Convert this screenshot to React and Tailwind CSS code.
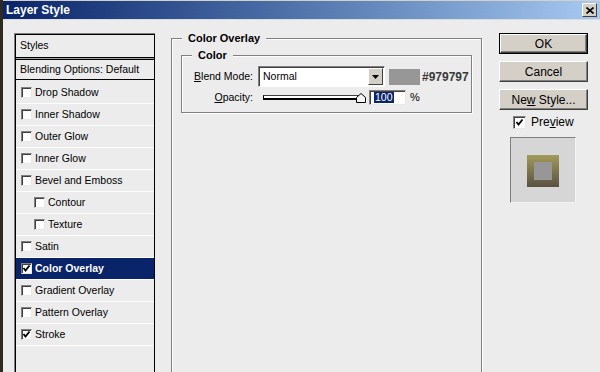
import React from 'react';

const items = [
  { label: 'Drop Shadow' },
  { label: 'Inner Shadow' },
  { label: 'Outer Glow' },
  { label: 'Inner Glow' },
  { label: 'Bevel and Emboss' },
  { label: 'Contour', indent: true },
  { label: 'Texture', indent: true },
  { label: 'Satin' },
  { label: 'Color Overlay', checked: true, active: true },
  { label: 'Gradient Overlay' },
  { label: 'Pattern Overlay' },
  { label: 'Stroke', checked: true },
];

function CheckBox({ checked, size = 'w-[11px] h-[11px]' }) {
  return (
    <span className={`${size} shrink-0 bg-white border border-t-[#808080] border-l-[#808080] border-b-[#e8e8e8] border-r-[#e8e8e8] shadow-[inset_1px_1px_0_#404040] flex items-center justify-center`}>
      {checked && (
        <svg width="9" height="9" viewBox="0 0 9 9">
          <path d="M1.5 4 L3.5 6.5 L7.5 1.5" fill="none" stroke="#000" strokeWidth="1.8" />
        </svg>
      )}
    </span>
  );
}

function Button({ children, isDefault }) {
  return (
    <div className={`h-[21px] w-[89px] ${isDefault ? 'border border-black' : ''}`}>
      <div className="h-full w-full bg-[#d4d0c8] border border-t-white border-l-white border-b-[#404040] border-r-[#404040] shadow-[inset_-1px_-1px_0_#808080] flex items-center justify-center text-[12px] text-black">
        <span>{children}</span>
      </div>
    </div>
  );
}

export default function App() {
  return (
    <div className="w-[600px] h-[372px] overflow-hidden bg-[#2e2a20] pl-[3px] font-['Liberation_Sans',Arial,sans-serif] text-[10.5px] text-black">
      <div className="h-full bg-[#ececec] flex flex-col">
        {/* title bar */}
        <div className="h-px shrink-0 bg-[#d4d0c8]" />
        <div className="h-[18px] shrink-0 flex items-center justify-between pl-[3px] pr-[3px] bg-gradient-to-r from-[#0a246a] to-[#a6caf0]">
          <span className="text-white font-bold text-[12px] leading-none">Layer Style</span>
          <div className="w-[15px] h-[14px] bg-[#d4d0c8] border border-t-white border-l-white border-b-[#404040] border-r-[#404040] flex items-center justify-center">
            <svg width="8" height="7" viewBox="0 0 8 7">
              <path d="M0.5 0.5 L7.5 6.5 M7.5 0.5 L0.5 6.5" stroke="#000" strokeWidth="1.6" />
            </svg>
          </div>
        </div>
        <div className="h-px shrink-0 bg-[#dcdcdc]" />

        <div className="flex flex-1 min-h-0 overflow-hidden">
          {/* styles list */}
          <div className="mt-[13px] ml-[11px] w-[141px] h-[400px] shrink-0 border-l border-t border-[#808080]">
            <div className="h-full border border-black border-b-0 flex flex-col">
              <div className="h-[23px] flex items-center pl-[4px] border-b border-black">Styles</div>
              <div className="h-px bg-[#a0a0a0]" />
              <div className="h-[21px] flex items-center pl-[4px] border-t border-b border-black">
                Blending Options: Default
              </div>
              <div className="pt-[2px] flex flex-col">
                {items.map((it) => (
                  <div
                    key={it.label}
                    className={`h-[22px] flex items-center border-b border-white ${it.indent ? 'pl-[18px]' : 'pl-[5px]'} ${it.active ? 'bg-[#0a246a] text-white font-bold' : ''}`}
                  >
                    <CheckBox checked={it.checked} />
                    <span className="ml-[3px]">{it.label}</span>
                  </div>
                ))}
              </div>
            </div>
          </div>

          {/* color overlay group */}
          <div className="ml-[16px] mt-[18px] w-[311px] h-[400px] shrink-0 relative border border-[#808080] shadow-[1px_1px_0_#fff,inset_1px_1px_0_#fff]">
            <span className="absolute left-[10px] -top-[7px] px-[6px] bg-[#ececec] font-bold text-[11px] leading-[13px]">Color Overlay</span>
            <div className="ml-[9px] mt-[16px] w-[291px] h-[58px] relative border border-[#808080] shadow-[1px_1px_0_#fff,inset_1px_1px_0_#fff]">
              <span className="absolute left-[10px] -top-[7px] px-[6px] bg-[#ececec] font-bold text-[11px] leading-[13px]">Color</span>
              <div className="mt-[10px] h-[21px] flex items-center">
                <span className="w-[71px] text-right"><u>B</u>lend Mode:</span>
                <div className="ml-[5px] w-[127px] h-[21px] bg-white border border-t-[#808080] border-l-[#808080] border-b-white border-r-white shadow-[inset_1px_1px_0_#404040] flex items-center justify-between pl-[4px] pr-[1px]">
                  <span>Normal</span>
                  <div className="w-[15px] h-[17px] bg-[#d4d0c8] border border-t-white border-l-white border-b-[#404040] border-r-[#404040] flex items-center justify-center">
                    <svg width="7" height="4" viewBox="0 0 7 4">
                      <path d="M0 0 H7 L3.5 4 Z" fill="#000" />
                    </svg>
                  </div>
                </div>
                <div className="ml-[4px] w-[31px] h-[16px] bg-[#979797]" />
                <span className="ml-[2px] font-bold text-[12px] text-[#3a3a3a]">#979797</span>
              </div>
              <div className="mt-[3px] h-[15px] flex items-center">
                <span className="w-[71px] text-right"><u>O</u>pacity:</span>
                <div className="ml-[10px] w-[103px] h-[10px] relative flex items-center">
                  <div className="w-[96px] h-[5px] bg-white border border-black border-b-2 border-t-[#404040]" />
                  <svg className="absolute right-0 top-0" width="10" height="10" viewBox="0 0 10 10">
                    <path d="M0.5 9.5 V4.5 L5 0.5 L9.5 4.5 V9.5 Z" fill="#f4f4f4" stroke="#000" strokeWidth="1" />
                  </svg>
                </div>
                <div className="ml-[3px] w-[37px] h-[15px] bg-white border border-t-[#808080] border-l-[#808080] border-b-[#e8e8e8] border-r-[#e8e8e8] shadow-[inset_1px_1px_0_#404040] flex items-center pl-[4px]">
                  <span className="bg-[#0a246a] text-white leading-[11px] px-px">100</span>
                </div>
                <span className="ml-[4px] text-[11px]">%</span>
              </div>
            </div>
          </div>

          {/* buttons */}
          <div className="ml-[17px] mt-[13px] flex flex-col shrink-0">
            <Button isDefault>OK</Button>
            <div className="mt-[7px]"><Button>Cancel</Button></div>
            <div className="mt-[7px]"><Button>Ne<u>w</u> Style...</Button></div>
            <div className="mt-[6px] ml-[14px] h-[13px] flex items-center">
              <CheckBox checked size="w-[13px] h-[13px]" />
              <span className="ml-[5px] text-[12px] leading-[13px]">Pre<u>v</u>iew</span>
            </div>
            <div className="mt-[8px] ml-[11px] w-[66px] h-[66px] bg-[#d6d6d6] border border-t-[#808080] border-l-[#808080] border-b-[#f4f4f4] border-r-[#f4f4f4]">
              <div className="ml-[16px] mt-[17px] w-[32px] h-[32px] bg-gradient-to-b from-[#a39b5a] to-[#5a5142] flex items-center justify-center">
                <div className="w-[18px] h-[18px] bg-[#979797]" />
              </div>
            </div>
          </div>
        </div>
      </div>
    </div>
  );
}
